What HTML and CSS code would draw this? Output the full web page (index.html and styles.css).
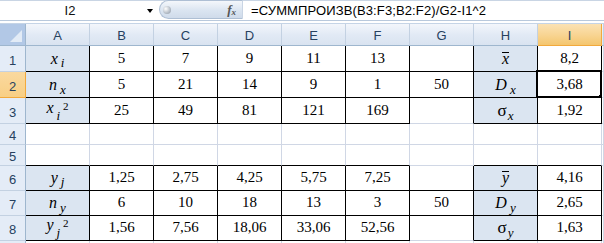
FILE: index.html
```html
<!DOCTYPE html>
<html lang="ru">
<head>
    <meta charset="UTF-8">
    <title>Лист1</title>
    <link rel="stylesheet" href="styles.css">
</head>
<body>
    <!-- formula bar -->
    <div class="formula-bar">
        <div class="name-box">
            <span class="name">I2</span>
            <span class="arrow"></span>
        </div>
        <div class="fx-btn">
            <span class="knob"></span>
            <span class="fx">f<sub>x</sub></span>
        </div>
        <div class="formula">=СУММПРОИЗВ(B3:F3;B2:F2)/G2-I1^2</div>
    </div>
    <div class="bar-gap"></div>

    <!-- sheet -->
    <div class="sheet">
        <div class="hd corner"><span class="tri"></span></div>
        <div class="hd col">A</div>
        <div class="hd col">B</div>
        <div class="hd col">C</div>
        <div class="hd col">D</div>
        <div class="hd col">E</div>
        <div class="hd col">F</div>
        <div class="hd col">G</div>
        <div class="hd col">H</div>
        <div class="hd col sel">I</div>
        <div class="hd col"></div>

        <div class="hd row">1</div>
        <div class="c f r b"><span class="lbl"><i>x</i><sub>i</sub></span></div>
        <div class="c r b">5</div>
        <div class="c r b">7</div>
        <div class="c r b">9</div>
        <div class="c r b">11</div>
        <div class="c r b">13</div>
        <div class="c r b"></div>
        <div class="c f r b"><span class="lbl"><i class="bar">x</i></span></div>
        <div class="c r b">8,2</div>
        <div class="c"></div>

        <div class="hd row sel">2</div>
        <div class="c f r b"><span class="lbl"><i>n</i><sub class="low">x</sub></span></div>
        <div class="c r b">5</div>
        <div class="c r b">21</div>
        <div class="c r b">14</div>
        <div class="c r b">9</div>
        <div class="c r b">1</div>
        <div class="c r b">50</div>
        <div class="c f r b"><span class="lbl"><i>D</i><sub class="low">x</sub></span></div>
        <div class="c r b">3,68</div>
        <div class="c"></div>

        <div class="hd row">3</div>
        <div class="c f r b"><span class="lbl sq"><i>x</i><sub>i</sub><sup>2</sup></span></div>
        <div class="c r b">25</div>
        <div class="c r b">49</div>
        <div class="c r b">81</div>
        <div class="c r b">121</div>
        <div class="c r b">169</div>
        <div class="c r"></div>
        <div class="c f r b"><span class="lbl"><span class="sigma">σ</span><sub class="tight">x</sub></span></div>
        <div class="c r b">1,92</div>
        <div class="c"></div>

        <div class="hd row">4</div>
        <div class="c"></div>
        <div class="c"></div>
        <div class="c"></div>
        <div class="c"></div>
        <div class="c"></div>
        <div class="c"></div>
        <div class="c"></div>
        <div class="c"></div>
        <div class="c"></div>
        <div class="c"></div>

        <div class="hd row">5</div>
        <div class="c b"></div>
        <div class="c b"></div>
        <div class="c b"></div>
        <div class="c b"></div>
        <div class="c b"></div>
        <div class="c b"></div>
        <div class="c"></div>
        <div class="c b"></div>
        <div class="c b"></div>
        <div class="c"></div>

        <div class="hd row">6</div>
        <div class="c f r b"><span class="lbl"><i>y</i><sub>j</sub></span></div>
        <div class="c r b">1,25</div>
        <div class="c r b">2,75</div>
        <div class="c r b">4,25</div>
        <div class="c r b">5,75</div>
        <div class="c r b">7,25</div>
        <div class="c r b"></div>
        <div class="c f r b"><span class="lbl"><i class="bar">y</i></span></div>
        <div class="c r b">4,16</div>
        <div class="c"></div>

        <div class="hd row">7</div>
        <div class="c f r b"><span class="lbl"><i>n</i><sub class="low">y</sub></span></div>
        <div class="c r b">6</div>
        <div class="c r b">10</div>
        <div class="c r b">18</div>
        <div class="c r b">13</div>
        <div class="c r b">3</div>
        <div class="c r b">50</div>
        <div class="c f r b"><span class="lbl"><i>D</i><sub class="low">y</sub></span></div>
        <div class="c r b">2,65</div>
        <div class="c"></div>

        <div class="hd row">8</div>
        <div class="c f r b"><span class="lbl sq"><i>y</i><sub>j</sub><sup>2</sup></span></div>
        <div class="c r b">1,56</div>
        <div class="c r b">7,56</div>
        <div class="c r b">18,06</div>
        <div class="c r b">33,06</div>
        <div class="c r b">52,56</div>
        <div class="c r"></div>
        <div class="c f r b"><span class="lbl"><span class="sigma">σ</span><sub class="tight">y</sub></span></div>
        <div class="c r b">1,63</div>
        <div class="c"></div>

        <div class="hd row"></div>
        <div class="c"></div>
        <div class="c"></div>
        <div class="c"></div>
        <div class="c"></div>
        <div class="c"></div>
        <div class="c"></div>
        <div class="c"></div>
        <div class="c"></div>
        <div class="c"></div>
        <div class="c"></div>

        <!-- active cell I2 -->
        <div class="selection"><span class="handle"></span></div>
    </div>
</body>
</html>
```

FILE: styles.css
```css
body {
    margin: 0;
    background-color: #fff;
    font-family: "Liberation Sans", Arial, sans-serif;
    width: 604px;
    height: 243px;
    overflow: hidden;
}
.formula-bar {
    height: 21px;
    box-sizing: border-box;
    display: flex;
    border-top: 1px solid #c9d5e4;
    border-bottom: 1px solid #b9c9dc;
    background-color: #fff;
}
.name-box {
    width: 157px;
    display: flex;
    align-items: center;
    position: relative;
}
.name-box .name {
    flex: 1;
    text-align: center;
    font-size: 13px;
    color: #111;
    padding-right: 17px;
}
.name-box .arrow {
    position: absolute;
    left: 147px;
    top: 8px;
    border-left: 3px solid transparent;
    border-right: 3px solid transparent;
    border-top: 4px solid #000;
}
.fx-btn {
    width: 84px;
    margin-left: 2px;
    height: 19px;
    margin-top: -1px;
    box-sizing: border-box;
    border: 1px solid #aebfd4;
    border-right: 1px solid #c9d5e4;
    border-radius: 10px 0 0 10px;
    background: linear-gradient(#f4f7fb, #dbe5f1 55%, #cfdbea);
    display: flex;
    align-items: center;
    justify-content: space-between;
    padding: 0 6px 0 3px;
}
.fx-btn .knob {
    width: 8px;
    height: 8px;
    border-radius: 50%;
    background: radial-gradient(circle at 35% 35%, #fff, #b4bcc6 60%, #8e98a4);
}
.fx-btn .fx {
    font-family: "Liberation Serif", serif;
    font-style: italic;
    font-weight: bold;
    font-size: 13px;
    color: #555;
}
.fx-btn .fx sub {
    font-size: 9px;
    vertical-align: -1px;
}
.formula {
    flex: 1;
    font-size: 13px;
    letter-spacing: 0.12px;
    color: #000;
    padding-left: 8px;
    line-height: 19px;
    white-space: nowrap;
}
.bar-gap {
    height: 2px;
    border-bottom: 1px solid #c5d4e6;
}

.sheet {
    position: relative;
    display: grid;
    grid-template-columns: 26px repeat(9, 64px) 1fr;
    grid-template-rows: 22px 26px 26px 26px 21px 21px 25px 25px 25px 1fr;
    height: 219px;
    overflow: hidden;
}
.sheet > div {
    box-sizing: border-box;
    overflow: hidden;
    min-width: 0;
    min-height: 0;
}
.hd {
    display: flex;
    align-items: center;
    justify-content: center;
    font-size: 13px;
    color: #27415f;
}
.hd.col {
    background: linear-gradient(#f3f6fb, #e2eaf5 50%, #d9e3f0);
    border-right: 1px solid #c3d1e2;
    border-bottom: 1px solid #9eb6ce;
    padding-top: 1px;
}
.hd.row {
    background-color: #e4ecf7;
    border-right: 1px solid #9eb6ce;
    border-bottom: 1px solid #c3d1e2;
    padding-top: 3px;
}
.hd.col.sel {
    background: linear-gradient(#fbe2b4, #f8d594 50%, #f4c66f);
    border-right-color: #f2a93c;
    border-bottom-color: #f2a93c;
}
.hd.row.sel {
    background: linear-gradient(#fad99f, #f8cf85);
    border-bottom-color: #f2a93c;
    border-right-color: #f2a93c;
}
.corner {
    background-color: #b2c8e6;
    border-right: 1px solid #9eb6ce;
    border-bottom: 1px solid #9eb6ce;
    position: relative;
}
.corner .tri {
    position: absolute;
    right: 3px;
    bottom: 3px;
    border-left: 12px solid transparent;
    border-bottom: 12px solid #e2ebf6;
}

.c {
    display: flex;
    align-items: flex-end;
    justify-content: center;
    padding-bottom: 4px;
    font-family: "Liberation Serif", "Times New Roman", serif;
    font-size: 15px;
    color: #000;
    border-right: 1px solid #d0d7e5;
    border-bottom: 1px solid #d0d7e5;
    white-space: nowrap;
}
.c.r {
    border-right-color: #000;
}
.c.b {
    border-bottom-color: #000;
}
.c.f {
    background-color: #dbe5f1;
}
.lbl {
    font-size: 16px;
    line-height: 17px;
}
.lbl sub {
    font-style: italic;
    font-size: 13px;
    vertical-align: -3px;
    line-height: 0;
    margin-left: 3px;
}
.lbl sub.low {
    vertical-align: -4px;
}
.lbl sub.tight {
    margin-left: 1px;
    vertical-align: -4px;
}
.lbl sup {
    font-size: 11px;
    vertical-align: 3px;
    line-height: 0;
    margin-left: 3px;
}
.lbl.sq {
    padding-bottom: 3px;
}
.lbl.sq sub {
    vertical-align: -7px;
}
.bar {
    display: inline-block;
    line-height: 10px;
    border-top: 1px solid #000;
    padding-top: 1px;
}
.sigma {
    font-size: 17px;
}

.selection {
    position: absolute;
    left: 536px;
    top: 46px;
    width: 66px;
    height: 28px;
    box-sizing: border-box;
    border: 2px solid #000;
    box-shadow: inset 0 0 0 1px #fff;
}
.selection .handle {
    position: absolute;
    right: -5px;
    bottom: -5px;
    width: 5px;
    height: 5px;
    background-color: #000;
    border: 1px solid #fff;
}
```
